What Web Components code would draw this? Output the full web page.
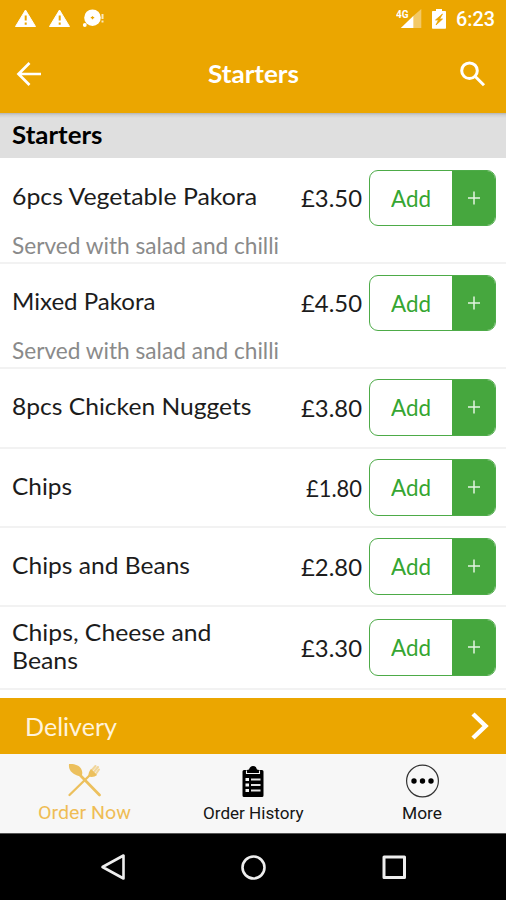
<!DOCTYPE html>
<html lang="en">
<head>
<meta charset="utf-8">
<title>Starters</title>
<style>
html,body{margin:0;padding:0}
body{width:506px;height:900px;overflow:hidden;background:#fff;font-family:Lato,"Open Sans",sans-serif;color:#1c1c1c}
</style>
</head>
<body>
<menu-app></menu-app>
<script>
const define=(name,html,init)=>customElements.define(name,class extends HTMLElement{
  connectedCallback(){
    if(this.shadowRoot)return;
    this.attachShadow({mode:'open'}).innerHTML=typeof html==='function'?html(this):html;
    if(init)init(this);
  }
});

/* A line of text widened so that it spans the given width. */
define('fitted-text',`<style>:host{display:block;white-space:nowrap}span{display:inline-block;transform-origin:0 50%}</style><span><slot></slot></span>`,el=>{
  const s=el.shadowRoot.querySelector('span'),w=+el.getAttribute('width');
  s.style.transform=`scaleX(${w/s.getBoundingClientRect().width})`;
  el.style.width=w+'px';
});

define('status-bar',`<style>
:host{display:flex;height:38px;align-items:center;padding:0 11px 0 14px;color:#fff;font:500 20px/38px Roboto,sans-serif}
.l{display:flex;gap:11px;flex:1}.r{display:flex;align-items:center}svg{display:block}
</style>
<div class="l">
<svg width="23" height="20" viewBox="0 0 23 20"><path d="M11.5 1 21.5 17.5H1.5Z" fill="#fff" stroke="#fff" stroke-linejoin="round"/><path d="M11.7 6.500v5M11.7 13.500v2.200" stroke="#eba600" stroke-width="2"/></svg>
<svg width="23" height="20" viewBox="0 0 23 20"><path d="M11.5 1 21.5 17.5H1.5Z" fill="#fff" stroke="#fff" stroke-linejoin="round"/><path d="M11.7 6.500v5M11.7 13.500v2.200" stroke="#eba600" stroke-width="2"/></svg>
<svg width="23" height="20" viewBox="0 0 23 20"><circle cx="10.5" cy="8.700" r="8.300" fill="#fff"/><circle cx="2.800" cy="16" r="1.900" fill="#fff"/><path d="M8.800 8.700h3.400M10.500 7.200v3" stroke="#eba600" stroke-width="1.300"/><path d="M20.500 5v5M20.500 11.400v2" stroke="#fff" stroke-opacity=".75" stroke-width="2"/></svg>
</div>
<div class="r">
<svg width="27" height="22" viewBox="0 0 27 22"><text x="0" y="9.500" font-family="Roboto" font-weight="700" font-size="10.500" textLength="12.500" lengthAdjust="spacingAndGlyphs" fill="#fff">4G</text><path d="M4.800 20 17.500 7.700V20Z" fill="#fff"/><path d="M17.500 7.700 25.300 1V20H17.500Z" fill="#fff" opacity=".4"/></svg>
<svg width="14" height="22" viewBox="0 0 14 22" style="margin:-1px 10px 0 9px"><path d="M4 1h6v2h3.200q.8 0 .8.8V20q0 .8-.8.8H.8Q0 20.800 0 20V3.800Q0 3 .8 3H4Z" fill="#fff"/><path d="M10.500 6 3.500 12H6.500L4 17 10.500 11H7.500Z" fill="#eba600" stroke="#eba600" stroke-width=".8"/></svg>
<fitted-text width="39">6:23</fitted-text>
</div>`);

define('app-bar',`<style>
:host{display:flex;height:75px;align-items:center;justify-content:space-between;padding:0 20px 0 16px;color:#fff;font-weight:700;font-size:24px;line-height:30px}
svg{display:block}fitted-text{padding-left:4px;margin-top:-3px}
</style>
<svg width="27" height="26" viewBox="0 0 27 26" fill="none" stroke="#fff" stroke-width="2.700" style="margin-top:-3px"><path d="M25 13H3M13.500 2 2.500 13l11 11"/></svg>
<fitted-text width="91">Starters</fitted-text>
<svg width="27" height="26" viewBox="0 0 27 26" fill="none" stroke="#fff" stroke-width="3" style="margin-top:-3px"><circle cx="10.500" cy="9.700" r="7.800"/><path d="m16 15.200 9 9"/></svg>`);

define('section-title',`<style>
:host{display:block;height:45px;background:linear-gradient(#b4b4b4 0,#cfcfcf 2px,#dfdfdf 5px);color:#000;font-weight:700;font-size:24px;line-height:43px;padding-left:11.500px;box-sizing:border-box}
</style><fitted-text width="90.500">Starters</fitted-text>`);

define('add-button',`<style>
:host{display:flex;width:126.500px;height:56.500px;box-sizing:border-box;border:1.500px solid #4dab48;border-radius:9px;overflow:hidden;color:#36a632;font-size:23px;line-height:54px}
.a{flex:1;display:flex;justify-content:center}
.p{width:42.500px;background:#46a73e;display:flex;align-items:center;justify-content:center}
svg{display:block;margin-left:2px}
</style><div class="a"><fitted-text width="40">Add</fitted-text></div><div class="p"><svg width="12" height="14" viewBox="0 0 12 14" stroke="#e4f5e2" stroke-width="1.500"><path d="M0 7h12M6 .500v13"/></svg></div>`);

define('menu-item',el=>`<style>
:host{display:grid;grid-template-columns:1fr auto 127px;grid-template-rows:57px auto;align-content:start;box-sizing:border-box;height:${el.getAttribute('height')}px;padding:${el.getAttribute('top')}px 10px 0 11.500px;border-bottom:2px solid #f2f2f2;font-size:23px;line-height:28px}
.n{align-self:center;margin-top:-4px}.pr{align-self:center;margin-right:7.500px}.d{color:#8a8a8a;line-height:30px;padding-top:3px;grid-column:1/3}
</style>
<div class="n"><slot></slot></div><fitted-text class="pr" width="${el.getAttribute('pw')||61}">${el.getAttribute('price')}</fitted-text><add-button></add-button>
${el.hasAttribute('note')?`<fitted-text class="d" width="267">${el.getAttribute('note')}</fitted-text>`:''}`);

define('delivery-bar',`<style>
:host{display:flex;height:56px;align-items:center;justify-content:space-between;background:#eba600;color:#fff3dc;padding:0 17px 0 24.500px;font-size:25px;line-height:56px}
svg{display:block}
</style><fitted-text width="92">Delivery</fitted-text><svg width="19" height="28" viewBox="0 0 19 28" fill="none" stroke="#fff" stroke-width="4.500"><path d="M3 2 15.500 14 3 26"/></svg>`);

define('tab-item',`<style>
:host{display:flex;flex:1;flex-direction:column;align-items:center;font:17px/20px Roboto,sans-serif;color:#151515}
:host([active]){color:#efbd55;font-size:19px}
.i{height:47px;display:flex;align-items:center;padding-top:1px;box-sizing:border-box}
</style><div class="i"><slot name="icon"></slot></div><slot></slot>`);

define('tab-bar',`<style>
:host{display:flex;height:79px;background:#f7f7f7;box-sizing:border-box;padding-top:1.500px}
svg{display:block}fitted-text{padding-left:1px}
</style>
<tab-item active><svg slot="icon" width="34" height="34" viewBox="0 0 34 34" fill="none" stroke="#ecc05d" stroke-linecap="round"><path d="M12 11 32.500 32" stroke-width="2.700"/><path d="M24 11 2.500 32" stroke-width="2.300"/><path d="M2 1C7 .500 12 2 14 5.500c1.500 3 1.500 4.500 1 6.500-2 1.300-4.500 1.200-7-.500C3 9 1.500 5 2 1Z" fill="#ecc05d" stroke="none"/><path d="M21.500 13.500c-.5-3 1-6 2.500-7.500l3 3 3 3c-2 2-5.500 2.500-8.500 1.500Z" fill="#ecc05d" stroke="none"/><path d="m24.500 7.500 4-4.500M26.500 9.500l4.500-5.500M28.500 11.500l3.500-5" stroke-width="2.100" opacity=".6"/></svg><fitted-text width="93">Order Now</fitted-text></tab-item>
<tab-item><svg slot="icon" width="22" height="32" viewBox="0 0 22 32" style="margin-top:4px"><path d="M2 4H5Q6 3.500 7 3.500 8 0 11 0q3 0 4 3.500 1 0 2 .5h3q1.500 0 1.500 1.500v24q0 1.500-1.500 1.500H2Q.5 31 .5 29.500v-24Q.5 4 2 4Z"/><path d="M4.500 4.500v3h13v-3" fill="none" stroke="#f7f7f7" stroke-width="1.100"/><path d="M3.500 13.500h3.500M3.500 19h3.500M3.500 24.500h3.500" stroke="#f7f7f7" stroke-width="3"/><path d="M9 13.500h9.500M9 19h9.500M9 24.500h9.500" stroke="#e4e4e4" stroke-width="2"/></svg><fitted-text width="100.500">Order History</fitted-text></tab-item>
<tab-item><svg slot="icon" width="34" height="34" viewBox="0 0 34 34" style="margin-top:3px"><circle cx="17.500" cy="17" r="15.900" fill="none" stroke="#333" stroke-width="1.200"/><circle cx="9" cy="17" r="2.700"/><circle cx="17.500" cy="17" r="2.700"/><circle cx="26" cy="17" r="2.700"/></svg><fitted-text width="40">More</fitted-text></tab-item>`);

define('system-nav',`<style>
:host{display:flex;height:67px;background:#000;align-items:center;justify-content:center;gap:114px;box-sizing:border-box;border-top:1px solid #555}
svg{display:block}
</style>
<svg width="26" height="28" viewBox="0 0 26 28" fill="none" stroke="#eee" stroke-width="2.600" stroke-linejoin="round"><path d="M23.500 2.500v23L2.500 14Z"/></svg>
<svg width="27" height="27" viewBox="0 0 27 27" fill="none" stroke="#eee" stroke-width="2.600"><circle cx="13.500" cy="13.500" r="11"/></svg>
<svg width="26" height="26" viewBox="0 0 26 26" fill="none" stroke="#eee" stroke-width="3" stroke-linejoin="round"><path d="M3 3h20.500v20.500H3Z"/></svg>`);

define('menu-app',`<style>
:host{display:flex;flex-direction:column;height:900px}
header{background:#eba600}
main{flex:1;background:#fff;overflow:hidden}
</style>
<header><status-bar></status-bar><app-bar></app-bar></header>
<main>
<section-title></section-title>
<menu-item height="106" top="11.500" price="£3.50" note="Served with salad and chilli"><fitted-text width="245">6pcs Vegetable Pakora</fitted-text></menu-item>
<menu-item height="105" top="10.500" price="£4.50" note="Served with salad and chilli"><fitted-text width="143.500">Mixed Pakora</fitted-text></menu-item>
<menu-item height="80" top="10" price="£3.80"><fitted-text width="239.500">8pcs Chicken Nuggets</fitted-text></menu-item>
<menu-item height="79" top="10" price="£1.80" pw="56"><fitted-text width="60">Chips</fitted-text></menu-item>
<menu-item height="79" top="10" price="£2.80"><fitted-text width="178">Chips and Beans</fitted-text></menu-item>
<menu-item height="83" top="12" price="£3.30"><fitted-text width="199.500">Chips, Cheese and</fitted-text><fitted-text width="66">Beans</fitted-text></menu-item>
</main>
<delivery-bar></delivery-bar><tab-bar></tab-bar><system-nav></system-nav>`);
</script>
</body>
</html>
